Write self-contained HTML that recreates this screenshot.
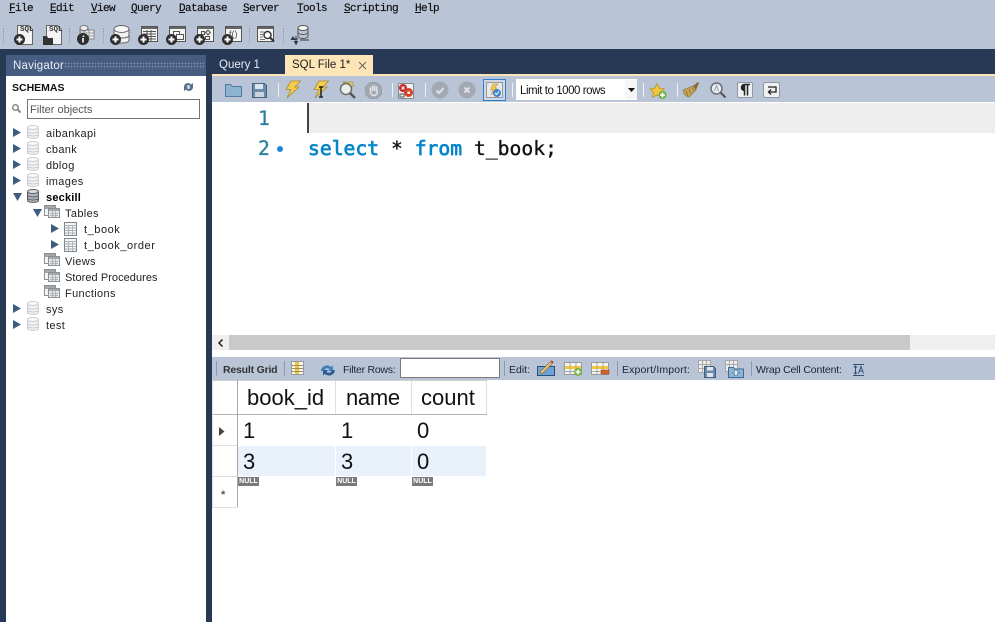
<!DOCTYPE html>
<html><head><meta charset="utf-8">
<style>
html,body{margin:0;padding:0;width:995px;height:622px;overflow:hidden;background:#283956}
body{position:relative;font-family:"Liberation Sans",sans-serif;font-size:11px;color:#1a1a1a}
.a{position:absolute}
.t{position:absolute;white-space:nowrap;line-height:14px}
.m{position:absolute;top:2px;font:11px/14px "Liberation Mono",monospace;letter-spacing:-.6px;color:#111;-webkit-text-stroke:.2px #111}
.m u{text-underline-offset:1px}
.tree{font-size:11px;letter-spacing:.35px;color:#222;margin-top:1px}
.sep{position:absolute;width:1px;background:#eef1f5;top:83px;height:14px}
.dsep{position:absolute;top:28px;height:16px;width:1px;border-left:1px dotted #8f9bad}
.rsep{position:absolute;width:1px;top:361px;height:15px;background:#8d99ab}
svg{position:absolute;overflow:visible}
.g{position:absolute;font-size:22px;line-height:26px;color:#111;white-space:nowrap}
.null{position:absolute;top:477px;width:21px;height:9px;background:#7a7a7a;color:#fff;font:bold 7px/9px "Liberation Sans",sans-serif;text-align:center;overflow:hidden}
.l{position:absolute;background:#dfdfdf}
.rt{font-size:10.5px;color:#1a2433;top:363px}
</style></head><body>
<svg width="0" height="0" style="position:absolute"><defs>
<g id="plus"><circle cx="5.500" cy="5.500" r="5.500" fill="#2f2f2f"/><path d="M5.500 2.500v6M2.500 5.500h6" stroke="#fff" stroke-width="2"/></g>
<g id="db"><path d="M.5 2.500v9c0 1.200 2.500 2 5.500 2s5.500-.8 5.500-2v-9z" fill="#f1f1f1" stroke="#c9cdd0"/><ellipse cx="6" cy="2.500" rx="5.500" ry="2" fill="#fafafa" stroke="#c9cdd0"/><path d="M.5 6c0 1.200 2.500 2 5.500 2s5.500-.8 5.500-2M.5 9c0 1.200 2.500 2 5.500 2s5.500-.8 5.500-2" fill="none" stroke="#c9cdd0"/></g>
<g id="dbd"><path d="M.5 2.500v9c0 1.200 2.500 2 5.500 2s5.500-.8 5.500-2v-9z" fill="#b0b4b8" stroke="#5a5f64"/><ellipse cx="6" cy="2.500" rx="5.500" ry="2" fill="#dcdfe1" stroke="#5a5f64"/><path d="M.5 6c0 1.200 2.500 2 5.500 2s5.500-.8 5.500-2M.5 9c0 1.200 2.500 2 5.500 2s5.500-.8 5.500-2" fill="none" stroke="#5a5f64"/></g>
<path id="tri" d="M0 0l8 4.500-8 4.500z" fill="#3d5c80"/>
<g id="tg"><rect x=".5" y=".5" width="11" height="10" fill="#f3f3f3" stroke="#8b9096"/><rect x="1" y="1" width="10" height="3" fill="#a3a8ae"/><rect x="4.500" y="3.500" width="11" height="9" fill="#e6e7e8" stroke="#8b9096"/><rect x="5" y="4" width="10" height="2" fill="#a3a8ae"/><path d="M6 8.500h8M6 10.500h8M8.500 6v6M11.500 6v6" stroke="#b0b4b8"/></g>
<g id="tb"><rect x=".5" y=".5" width="12" height="13" fill="#f4f4f4" stroke="#82888f"/><path d="M1 3.500h11M1 6h11M1 8.500h11M1 11h11M4.500 3v10M8.500 3v10" stroke="#aeb3b9"/></g>
<g id="bolt"><path d="M6 0h9.500L10 6h4L2 17l4-8.500H1z" fill="#f3cd4b" stroke="#a98a35" stroke-width=".8"/></g>
<g id="grid"><rect x=".5" y=".5" width="17" height="12" fill="#f5f5f5" stroke="#9a9a9a"/><rect x="1" y="4" width="16" height="3" fill="#f2c93c"/><path d="M6 1v11M12 1v11M1 9.500h16" stroke="#a5a5a5"/></g>
</defs></svg>

<!-- top bar -->
<div class="a" style="left:0;top:0;width:995px;height:49px;background:#b9c5d6"></div>
<div class="m" style="left:9px"><u>F</u>ile</div>
<div class="m" style="left:50px"><u>E</u>dit</div>
<div class="m" style="left:91px"><u>V</u>iew</div>
<div class="m" style="left:131px"><u>Q</u>uery</div>
<div class="m" style="left:179px"><u>D</u>atabase</div>
<div class="m" style="left:243px"><u>S</u>erver</div>
<div class="m" style="left:297px"><u>T</u>ools</div>
<div class="m" style="left:344px"><u>S</u>cripting</div>
<div class="m" style="left:415px"><u>H</u>elp</div>

<div class="dsep" style="left:3px"></div><div class="dsep" style="left:69px"></div><div class="dsep" style="left:103px"></div><div class="dsep" style="left:249px"></div><div class="dsep" style="left:283px"></div>
<svg style="left:14px;top:25px" width="20" height="20"><path d="M3.500.5h11l4 4v15h-15z" fill="#f3f3f3" stroke="#666"/><use href="#plus" y="9"/></svg>
<div class="t" style="left:20px;top:26px;font:bold 7.500px/8px 'Liberation Mono',monospace;color:#333">SQL</div>
<svg style="left:43px;top:25px" width="20" height="20"><path d="M3.500.5h11l4 4v15h-15z" fill="#f3f3f3" stroke="#666"/><path d="M0 11h4l1 2h5v7H0z" fill="#333"/></svg>
<div class="t" style="left:49px;top:26px;font:bold 7.500px/8px 'Liberation Mono',monospace;color:#333">SQL</div>
<svg style="left:77px;top:25px" width="18" height="20"><rect x="8" y="5" width="9" height="9" fill="#eee" stroke="#888"/><path d="M9 8h8M9 11h8M12 5v9" stroke="#999"/><ellipse cx="7" cy="3" rx="4" ry="2.500" fill="#eee" stroke="#777"/><path d="M3 3v6M11 3v3" stroke="#777"/><circle cx="6" cy="14" r="6" fill="#2f2f2f"/><path d="M6.500 10.500v1.500M6 13v4.500" stroke="#fff" stroke-width="1.600" fill="none"/></svg>
<svg style="left:110px;top:25px" width="21" height="20"><path d="M4 4v11c0 2 3 3 7.500 3s7.500-1 7.500-3V4z" fill="#f0f0f0" stroke="#666"/><ellipse cx="11.500" cy="4" rx="7.500" ry="3.500" fill="#f8f8f8" stroke="#666"/><path d="M4 10c0 2 3 3 7.500 3s7.500-1 7.500-3" fill="none" stroke="#666"/><use href="#plus" y="9"/></svg>
<svg style="left:138px;top:26px" width="21" height="19"><rect x="3.500" y=".5" width="16" height="15" fill="#f5f5f5" stroke="#555"/><rect x="4" y="1" width="15" height="2" fill="#666"/><path d="M5 5.500h13M5 8h13M5 10.500h13M5 13h13M9 4v11M13 4v11" stroke="#555"/><use href="#plus" y="8"/></svg>
<svg style="left:166px;top:26px" width="21" height="19"><rect x="3.500" y=".5" width="16" height="15" fill="#f5f5f5" stroke="#555"/><rect x="4" y="1" width="15" height="2" fill="#666"/><rect x="7.500" y="5.500" width="6" height="5" fill="none" stroke="#555"/><rect x="10.500" y="8.500" width="7" height="5" fill="#f5f5f5" stroke="#555"/><use href="#plus" y="8"/></svg>
<svg style="left:194px;top:26px" width="21" height="19"><rect x="3.500" y=".5" width="16" height="15" fill="#f5f5f5" stroke="#555"/><rect x="4" y="1" width="15" height="2" fill="#666"/><path d="M14 4l2.500 2.500L14 9l-2.500-2.500z" fill="#ddd" stroke="#555"/><rect x="7.500" y="5.500" width="3" height="3" fill="none" stroke="#555"/><rect x="11.500" y="10.500" width="4" height="3" fill="none" stroke="#555"/><use href="#plus" y="8"/></svg>
<svg style="left:222px;top:26px" width="21" height="19"><rect x="3.500" y=".5" width="16" height="15" fill="#f5f5f5" stroke="#555"/><rect x="4" y="1" width="15" height="2" fill="#666"/><use href="#plus" y="8"/></svg>
<div class="t" style="left:229px;top:29px;font-size:9px;line-height:11px;color:#555">f()</div>
<svg style="left:257px;top:26px" width="19" height="19"><rect x=".5" y=".5" width="16" height="15" fill="#f5f5f5" stroke="#555"/><rect x="1" y="1" width="15" height="2" fill="#666"/><path d="M3 6h4M3 8.500h3M3 11h3M3 13.500h5" stroke="#777"/><circle cx="10.500" cy="9" r="3.500" fill="#fff" stroke="#333" stroke-width="1.500"/><path d="M13 11.500l4 4" stroke="#333" stroke-width="2"/></svg>
<svg style="left:290px;top:25px" width="20" height="21"><ellipse cx="13" cy="3" rx="5" ry="2.500" fill="#f5f5f5" stroke="#555"/><path d="M8 3v8c0 1.500 2 2.500 5 2.500s5-1 5-2.500V3M8 7c0 1.500 2 2.500 5 2.500S18 8.500 18 7" fill="none" stroke="#555"/><path d="M10 15h9M6 11v9M1 14h7" stroke="#333"/><path d="M3 11l-2.500 4h5zM6 20l-2.500-4h5z" fill="#2a3a4c"/></svg>

<!-- Navigator -->
<div class="a" style="left:6px;top:55px;width:200px;height:21px;background:#465d81"></div>
<div class="t" style="left:13px;top:59px;color:#e8edf4;font-size:11.500px;letter-spacing:.2px">Navigator</div>
<div class="a" style="left:64px;top:62px;width:140px;height:7px;background:radial-gradient(circle,#7d8fa9 .7px,transparent 1px) 0 0/3px 3px"></div>
<div class="a" style="left:6px;top:76px;width:200px;height:546px;background:#fff"></div>
<div class="t" style="left:12px;top:81px;font-weight:bold;font-size:10.500px;color:#111">SCHEMAS</div>
<svg style="left:183px;top:82px" width="11" height="10"><path d="M1 4.500A4 4 0 0 1 8 2.500L10 1v4.500H5.500l1.500-1.500A2 2 0 0 0 3.500 4.500zM10 5.500A4 4 0 0 1 3 7.500L1 9V4.500h4.500L4 6a2 2 0 0 0 3.500-.5z" fill="#54708f"/></svg>
<svg style="left:12px;top:104px" width="9" height="9"><circle cx="3.500" cy="3.500" r="2.800" fill="none" stroke="#888" stroke-width="1.500"/><path d="M5.500 5.500l3 3" stroke="#888" stroke-width="2"/></svg>
<div class="a" style="left:27px;top:99px;width:171px;height:18px;border:1px solid #767676;background:#fff"></div>
<div class="t tree" style="left:30px;top:102px;color:#555;letter-spacing:0">Filter objects</div>

<svg style="left:13px;top:128px" width="8" height="9"><use href="#tri"/></svg><svg style="left:27px;top:125px" width="12" height="14"><use href="#db"/></svg><div class="t tree" style="left:46px;top:126px">aibankapi</div>
<svg style="left:13px;top:144px" width="8" height="9"><use href="#tri"/></svg><svg style="left:27px;top:141px" width="12" height="14"><use href="#db"/></svg><div class="t tree" style="left:46px;top:142px">cbank</div>
<svg style="left:13px;top:160px" width="8" height="9"><use href="#tri"/></svg><svg style="left:27px;top:157px" width="12" height="14"><use href="#db"/></svg><div class="t tree" style="left:46px;top:158px">dblog</div>
<svg style="left:13px;top:176px" width="8" height="9"><use href="#tri"/></svg><svg style="left:27px;top:173px" width="12" height="14"><use href="#db"/></svg><div class="t tree" style="left:46px;top:174px">images</div>
<svg style="left:13px;top:193px" width="10" height="8"><path d="M0 0h9L4.500 8z" fill="#3d5c80"/></svg><svg style="left:27px;top:189px" width="12" height="14"><use href="#dbd"/></svg><div class="t tree" style="left:46px;top:190px;font-weight:bold;color:#000;letter-spacing:.2px">seckill</div>
<svg style="left:33px;top:209px" width="10" height="8"><path d="M0 0h9L4.500 8z" fill="#3d5c80"/></svg><svg style="left:44px;top:205px" width="17" height="14"><use href="#tg"/></svg><div class="t tree" style="left:65px;top:206px">Tables</div>
<svg style="left:51px;top:224px" width="8" height="9"><use href="#tri"/></svg><svg style="left:64px;top:222px" width="13" height="14"><use href="#tb"/></svg><div class="t tree" style="left:84px;top:222px;letter-spacing:.55px">t_book</div>
<svg style="left:51px;top:240px" width="8" height="9"><use href="#tri"/></svg><svg style="left:64px;top:238px" width="13" height="14"><use href="#tb"/></svg><div class="t tree" style="left:84px;top:238px;letter-spacing:.55px">t_book_order</div>
<svg style="left:44px;top:253px" width="17" height="14"><use href="#tg"/></svg><div class="t tree" style="left:65px;top:254px">Views</div>
<svg style="left:44px;top:269px" width="17" height="14"><use href="#tg"/></svg><div class="t tree" style="left:65px;top:270px;letter-spacing:.05px">Stored Procedures</div>
<svg style="left:44px;top:285px" width="17" height="14"><use href="#tg"/></svg><div class="t tree" style="left:65px;top:286px">Functions</div>
<svg style="left:13px;top:304px" width="8" height="9"><use href="#tri"/></svg><svg style="left:27px;top:301px" width="12" height="14"><use href="#db"/></svg><div class="t tree" style="left:46px;top:302px">sys</div>
<svg style="left:13px;top:320px" width="8" height="9"><use href="#tri"/></svg><svg style="left:27px;top:317px" width="12" height="14"><use href="#db"/></svg><div class="t tree" style="left:46px;top:318px">test</div>

<!-- tabs -->
<div class="t" style="left:219px;top:58px;color:#e8edf4;font-size:11.500px">Query 1</div>
<div class="a" style="left:285px;top:55px;width:88px;height:19px;background:#fde5b7"></div>
<div class="t" style="left:292px;top:58px;color:#222;font-size:11.500px">SQL File 1*</div>
<svg style="left:358px;top:61px" width="9" height="9"><path d="M1 1l7 7M8 1L1 8" stroke="#666"/></svg>
<div class="a" style="left:212px;top:74px;width:783px;height:2px;background:#fde5b7"></div>

<!-- query toolbar -->
<div class="a" style="left:212px;top:76px;width:783px;height:26px;background:#b9c5d6"></div>
<svg style="left:225px;top:83px" width="17" height="14"><path d="M.5 13.500V1.500h5l2 2h9v10z" fill="#8db3d3" stroke="#557c9f"/></svg>
<svg style="left:252px;top:83px" width="15" height="15"><path d="M.5.500h12l2 2v12H.5z" fill="#6d8ba8" stroke="#44617e"/><rect x="3" y="1" width="8" height="5" fill="#dde6ee"/><rect x="3" y="9" width="9" height="5" fill="#c8d3de"/></svg>
<div class="sep" style="left:278px"></div>
<svg style="left:285px;top:81px" width="16" height="18"><use href="#bolt"/></svg>
<svg style="left:313px;top:81px" width="16" height="18"><use href="#bolt"/><path d="M6 6h4M6 16h4M8 6v10" stroke="#222" stroke-width="1.500"/></svg>
<svg style="left:338px;top:81px" width="19" height="19"><path d="M5 1h9l2 4-4 1z" fill="#dcc57a" stroke="#a58c45" stroke-width=".7"/><circle cx="8" cy="8" r="5.500" fill="#e9eef3" stroke="#6e6e5d" stroke-width="1.500"/><path d="M12 12l5 5" stroke="#555" stroke-width="2.500"/></svg>
<svg style="left:365px;top:82px" width="17" height="17"><path d="M5 .5h7l4.500 4.500v7L12 16.500H5L.5 12V5z" fill="#a2a9b2" stroke="#98a0aa"/><path d="M5.500 10V5.500M7.500 9V3.500M9.500 9V3.500M11.500 9.500V4.500M5.500 9c0 3 1.500 4.500 3.500 4.500s3-1 3.500-5" stroke="#dfe2e6" stroke-width="1.500" fill="none"/></svg>
<div class="sep" style="left:392px"></div>
<svg style="left:398px;top:83px" width="17" height="17"><rect x=".5" y=".5" width="15" height="15" rx="1" fill="#eef0f2" stroke="#888"/><circle cx="5" cy="5" r="4" fill="#c4272b"/><circle cx="10.500" cy="9.500" r="4.500" fill="#d9402a"/><path d="M3.500 3.500l3 3M6.500 3.500l-3 3" stroke="#fff"/><rect x="9.500" y="8.500" width="2.500" height="2.500" fill="#fff"/><path d="M2 11h4v3H2z" fill="none" stroke="#555"/></svg>
<div class="sep" style="left:425px"></div>
<svg style="left:431px;top:81px" width="18" height="18"><circle cx="9" cy="9" r="8.500" fill="#a2a9b2"/><path d="M5.500 9.500L8 12l4.500-5" stroke="#dfe2e6" stroke-width="2" fill="none"/></svg>
<svg style="left:458px;top:81px" width="18" height="18"><circle cx="9" cy="9" r="8.500" fill="#a2a9b2"/><path d="M6.500 6.500l5 5M11.500 6.500l-5 5" stroke="#dfe2e6" stroke-width="2" fill="none"/></svg>
<div class="a" style="left:483px;top:79px;width:23px;height:22px;border:1px solid #2a7fd0;box-sizing:border-box;background:#cfd7e2"></div>
<svg style="left:486px;top:82px" width="17" height="17"><rect x=".5" y=".5" width="16" height="15" fill="#e8e8e8" stroke="#999"/><path d="M7 2h5L8.500 6H11l-6 7 2-5H4.500z" fill="#efc948" stroke="#a98a35" stroke-width=".5"/><circle cx="11" cy="11" r="4" fill="#3f85cf"/><path d="M9 11l1.500 1.500 2.500-3" stroke="#fff" fill="none"/></svg>
<div class="sep" style="left:512px"></div>
<div class="a" style="left:516px;top:79px;width:121px;height:21px;background:#fff"></div>
<div class="a" style="left:625px;top:80px;width:12px;height:19px;background:#f5f5f5"></div>
<div class="t" style="left:520px;top:84px;color:#111;font-size:11.500px;letter-spacing:-.45px">Limit to 1000 rows</div>
<svg style="left:628px;top:88px" width="7" height="4"><path d="M0 0h7L3.500 4z" fill="#111"/></svg>
<div class="sep" style="left:643px"></div>
<svg style="left:650px;top:83px" width="18" height="17"><path d="M7 .5l2.200 4.500 5 .7-3.600 3.500.8 5-4.400-2.300-4.400 2.300.8-5L0 5.700l5-.7z" fill="#f0c63d" stroke="#b28e2e" stroke-width=".7"/><circle cx="12.500" cy="12" r="4" fill="#6fb13c"/><path d="M12.500 9.500v5M10 12h5" stroke="#fff" stroke-width="1.500"/></svg>
<div class="sep" style="left:677px"></div>
<svg style="left:683px;top:82px" width="17" height="16"><path d="M0 8l10-4 3 4-7 7c-2 .5-5-2-6-7z" fill="#c8a35c" stroke="#94773d" stroke-width=".7"/><path d="M10 4l5-4 1 1-3 7z" fill="#8b6a36"/><path d="M3 9l2 5M6 7l2 5M9 6l2 3" stroke="#94773d"/></svg>
<svg style="left:710px;top:82px" width="16" height="16"><circle cx="6.500" cy="6.500" r="5.500" fill="#e9edf1" stroke="#6a7077" stroke-width="1.500"/><path d="M10.500 10.500l5 5" stroke="#555" stroke-width="2"/><path d="M4.500 9L6.500 3.500l2 5.500" fill="none" stroke="#9aa5b0"/></svg>
<div class="a" style="left:737px;top:82px;width:16px;height:16px;background:#eef0f2;border:1px solid #8f98a3;border-radius:2px;box-sizing:border-box"></div>
<svg style="left:739px;top:84px" width="12" height="12"><path d="M5.500 .5H11M5.500 .5a3 3 0 0 0 0 6zM5.500 .5v11M8.500 .5v11" stroke="#222" stroke-width="1.500" fill="#222"/></svg>
<div class="a" style="left:763px;top:82px;width:17px;height:16px;background:#eef0f2;border:1px solid #8f98a3;border-radius:2px;box-sizing:border-box"></div>
<svg style="left:765px;top:85px" width="13" height="11"><path d="M3 2h8v5H4M6 4.500L3.500 7 6 9.500" stroke="#222" stroke-width="1.300" fill="none"/></svg>

<!-- editor -->
<div class="a" style="left:212px;top:102px;width:783px;height:233px;background:#fff"></div>
<div class="a" style="left:308px;top:103px;width:687px;height:30px;background:#eeeeee"></div>
<div class="a" style="left:307px;top:103px;width:2px;height:30px;background:#444"></div>
<div class="t" style="left:258px;top:107px;font:19.700px/24px 'DejaVu Sans Mono',monospace;color:#2a7f9e;-webkit-text-stroke:.3px currentColor">1</div>
<div class="t" style="left:258px;top:137px;font:19.700px/24px 'DejaVu Sans Mono',monospace;color:#2a7f9e;-webkit-text-stroke:.3px currentColor">2</div>
<div class="a" style="left:277px;top:146px;width:6px;height:6px;border-radius:50%;background:#1b86d6"></div>
<div class="t" style="left:308px;top:137px;font:19.700px/24px 'DejaVu Sans Mono',monospace;color:#111;-webkit-text-stroke:.35px currentColor"><span style="color:#0685c9;-webkit-text-stroke:.7px #0685c9">select</span> * <span style="color:#0685c9;-webkit-text-stroke:.7px #0685c9">from</span> t_book;</div>

<!-- scrollbar -->
<div class="a" style="left:212px;top:335px;width:783px;height:15px;background:#efefef"></div>
<div class="a" style="left:229px;top:335px;width:681px;height:15px;background:#c9c9c9"></div>
<svg style="left:218px;top:339px" width="6" height="8"><path d="M4.500 .5L1 4l3.500 3.500" stroke="#222" stroke-width="1.500" fill="none"/></svg>
<div class="a" style="left:212px;top:350px;width:783px;height:7px;background:#fff"></div>

<!-- result toolbar -->
<div class="a" style="left:212px;top:357px;width:783px;height:23px;background:#b9c5d6"></div>
<div class="rsep" style="left:216px"></div>
<div class="t rt" style="left:223px;font-weight:bold;letter-spacing:-.2px;color:#333">Result Grid</div>
<div class="rsep" style="left:284px"></div>
<svg style="left:291px;top:361px" width="13" height="15"><rect x=".5" y=".5" width="12" height="13" fill="#f7f7f7" stroke="#9a9a9a"/><rect x="4" y="1" width="4" height="12" fill="#f0c63d"/><path d="M1 4.500h11M1 7.500h11M1 10.500h11" stroke="#a08f50"/></svg>
<svg style="left:320px;top:364px" width="16" height="13"><path d="M1 7a6 6 0 0 1 10-4l2-1.500V7H8l1.500-2A3.500 3.500 0 0 0 4 7z" fill="#3d80bd"/><path d="M15 6a6 6 0 0 1-10 4l-2 1.500V6h5L6.500 8A3.500 3.500 0 0 0 12 6z" fill="#2e5e94"/></svg>
<div class="t rt" style="left:343px;letter-spacing:-.25px">Filter Rows:</div>
<div class="a" style="left:400px;top:358px;width:100px;height:20px;box-sizing:border-box;border:1px solid #7a7a7a;background:#fff"></div>
<div class="rsep" style="left:504px"></div>
<div class="t rt" style="left:509px">Edit:</div>
<svg style="left:537px;top:360px" width="18" height="17"><rect x=".5" y="6.500" width="17" height="9" fill="#6fa3d8" stroke="#2b4e74"/><path d="M3 12L12 3l3-2 1 1-2 3-9 9z" fill="#e5c27a" stroke="#8a6e3d" stroke-width=".7"/><path d="M14 1l2 2" stroke="#c03030" stroke-width="1.500"/></svg>
<svg style="left:564px;top:362px" width="18" height="15"><use href="#grid"/><circle cx="14" cy="10" r="4" fill="#74b340"/><path d="M14 7.500v5M11.500 10h5" stroke="#fff" stroke-width="1.500"/></svg>
<svg style="left:591px;top:362px" width="18" height="15"><use href="#grid"/><rect x="10" y="8" width="8" height="4" fill="#d4632a" stroke="#8f3e18" stroke-width=".5"/></svg>
<div class="rsep" style="left:617px"></div>
<div class="t rt" style="left:622px;letter-spacing:.15px">Export/Import:</div>
<svg style="left:698px;top:360px" width="18" height="18"><rect x=".5" y=".5" width="12" height="12" fill="#eee" stroke="#a8a8a8"/><path d="M1 4.500h11M1 8.500h11M4.500 1v11M8.500 1v11" stroke="#a8a8a8"/><path d="M6.500 6.500h9l2 2v9h-11z" fill="#6d8ba8" stroke="#3e5d7c"/><rect x="9" y="7" width="6" height="3.500" fill="#dde6ee"/><rect x="9" y="13" width="6" height="4" fill="#dde6ee"/></svg>
<svg style="left:725px;top:360px" width="19" height="18"><rect x=".5" y=".5" width="12" height="11" fill="#eee" stroke="#a8a8a8"/><path d="M1 4.500h11M4.500 1v10M8.500 1v10" stroke="#a8a8a8"/><path d="M3.500 17.500V7.500h5l1.500 1.500h8.500v8.500z" fill="#8db3d3" stroke="#3e6a94"/><path d="M11 9.500l3.500 3.500H12.500v2.500h-3V13H7.500z" fill="#dfe9f2" stroke="#3e6a94" stroke-width=".6"/></svg>
<div class="rsep" style="left:751px"></div>
<div class="t rt" style="left:756px;letter-spacing:-.15px">Wrap Cell Content:</div>
<svg style="left:853px;top:364px" width="12" height="12"><path d="M0 .5h11M0 11.500h11M2.500 2v8M1 3.500L2.500 2 4 3.500M1 8.500L2.500 10 4 8.500" stroke="#33527a" fill="none"/><path d="M5.500 9.500L8 2.500l2.500 7M6.500 7h3" stroke="#33527a" fill="none"/></svg>

<!-- grid -->
<div class="a" style="left:212px;top:380px;width:783px;height:242px;background:#fff"></div>
<div class="a" style="left:238px;top:446px;width:248px;height:30px;background:#e9f1fb"></div>
<div class="l" style="left:212px;top:380px;width:275px;height:1px;background:#d0d0d0"></div>
<div class="l" style="left:212px;top:414px;width:275px;height:1px;background:#b5b5b5"></div>
<div class="l" style="left:237px;top:380px;width:1px;height:128px;background:#a9a9a9"></div>
<div class="l" style="left:335px;top:381px;width:1px;height:33px"></div>
<div class="l" style="left:411px;top:381px;width:1px;height:33px"></div>
<div class="l" style="left:486px;top:381px;width:1px;height:33px"></div>
<div class="l" style="left:335px;top:446px;width:1px;height:30px;background:#fff"></div>
<div class="l" style="left:411px;top:446px;width:1px;height:30px;background:#fff"></div>
<div class="l" style="left:212px;top:445px;width:25px;height:1px"></div>
<div class="l" style="left:212px;top:476px;width:25px;height:1px"></div>
<div class="l" style="left:212px;top:507px;width:26px;height:1px"></div>
<div class="l" style="left:212px;top:380px;width:1px;height:128px"></div>
<div class="g" style="left:247px;top:385px">book_id</div>
<div class="g" style="left:346px;top:385px;letter-spacing:-.3px">name</div>
<div class="g" style="left:421px;top:385px">count</div>
<div class="g" style="left:243px;top:418px">1</div><div class="g" style="left:341px;top:418px">1</div><div class="g" style="left:417px;top:418px">0</div>
<div class="g" style="left:243px;top:449px">3</div><div class="g" style="left:341px;top:449px">3</div><div class="g" style="left:417px;top:449px">0</div>
<svg style="left:219px;top:427px" width="6" height="9"><path d="M0 0l5.500 4.500L0 9z" fill="#444"/></svg>
<div class="t" style="left:221px;top:490px;font-size:11px;line-height:10px;color:#555;font-weight:bold">*</div>
<div class="null" style="left:238px">NULL</div><div class="null" style="left:336px">NULL</div><div class="null" style="left:412px">NULL</div>
</body></html>
